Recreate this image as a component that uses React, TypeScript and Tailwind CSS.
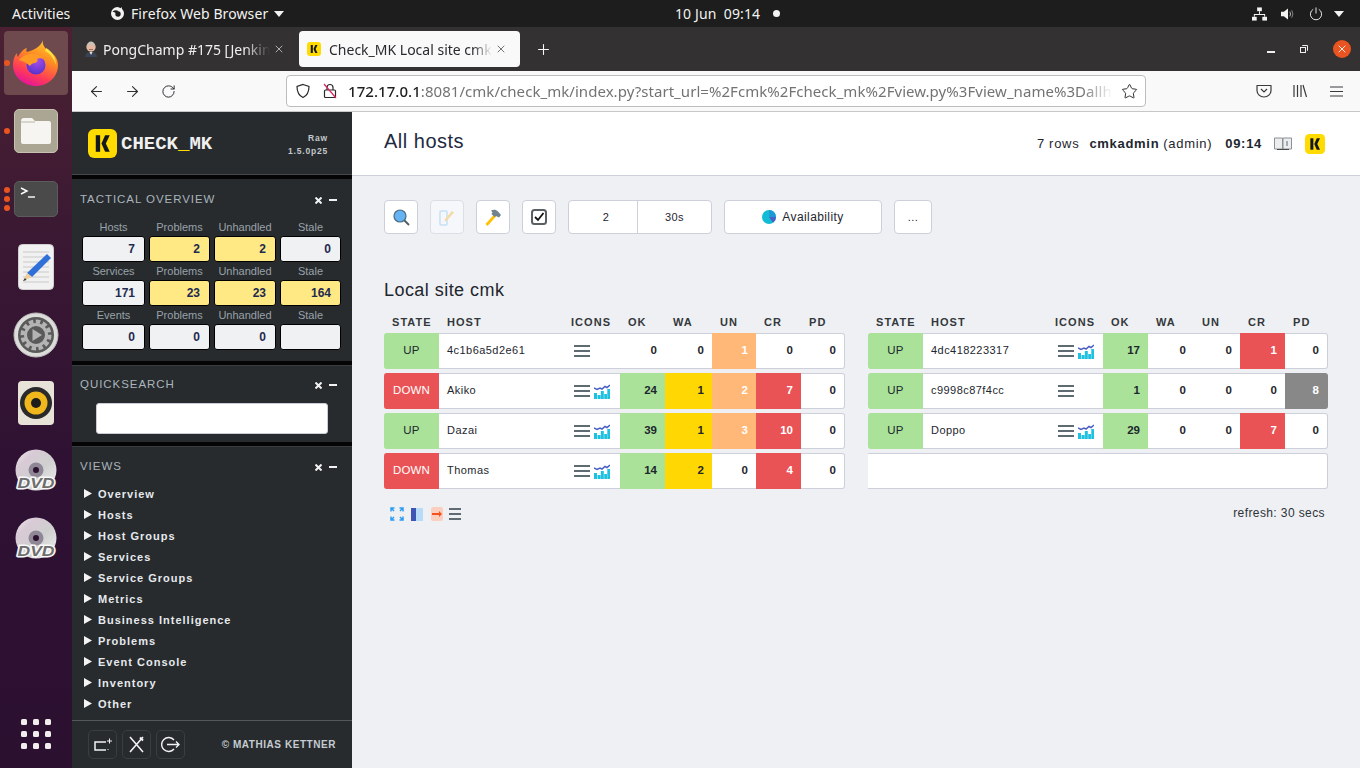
import React from 'react'
import { ArrowLeft, ArrowRight, RotateCw, Star, X, Plus } from 'lucide-react'

const sans = 'font-["Liberation_Sans",Arial,sans-serif]'
const ui = 'font-["Noto_Sans",sans-serif]'

type Tone = 'ok' | 'warn' | 'unk' | 'crit' | 'pend' | 'none'

interface HostRow {
  state: 'UP' | 'DOWN'
  host: string
  graph: boolean
  cells: [number, Tone][]
}

const leftRows: HostRow[] = [
  { state: 'UP', host: '4c1b6a5d2e61', graph: false, cells: [[0, 'none'], [0, 'none'], [1, 'unk'], [0, 'none'], [0, 'none']] },
  { state: 'DOWN', host: 'Akiko', graph: true, cells: [[24, 'ok'], [1, 'warn'], [2, 'unk'], [7, 'crit'], [0, 'none']] },
  { state: 'UP', host: 'Dazai', graph: true, cells: [[39, 'ok'], [1, 'warn'], [3, 'unk'], [10, 'crit'], [0, 'none']] },
  { state: 'DOWN', host: 'Thomas', graph: true, cells: [[14, 'ok'], [2, 'warn'], [0, 'none'], [4, 'crit'], [0, 'none']] },
]

const rightRows: HostRow[] = [
  { state: 'UP', host: '4dc418223317', graph: true, cells: [[17, 'ok'], [0, 'none'], [0, 'none'], [1, 'crit'], [0, 'none']] },
  { state: 'UP', host: 'c9998c87f4cc', graph: false, cells: [[1, 'ok'], [0, 'none'], [0, 'none'], [0, 'none'], [8, 'pend']] },
  { state: 'UP', host: 'Doppo', graph: true, cells: [[29, 'ok'], [0, 'none'], [0, 'none'], [7, 'crit'], [0, 'none']] },
]

const toneClass: Record<Tone, string> = {
  ok: 'bg-[#a9e298] border-[#a9e298] text-[#1e262e]',
  warn: 'bg-[#ffd703] border-[#ffd703] text-[#1e262e]',
  unk: 'bg-[#ffb878] border-[#ffb878] text-white',
  crit: 'bg-[#ea5355] border-[#ea5355] text-white',
  pend: 'bg-[#888888] border-[#888888] text-white',
  none: 'bg-white border-[#cdcfdb] text-[#1e262e]',
}

const views = ['Overview', 'Hosts', 'Host Groups', 'Services', 'Service Groups', 'Metrics', 'Business Intelligence', 'Problems', 'Event Console', 'Inventory', 'Other']

const tactical = [
  { labels: ['Hosts', 'Problems', 'Unhandled', 'Stale'], values: ['7', '2', '2', '0'], hot: [false, true, true, false] },
  { labels: ['Services', 'Problems', 'Unhandled', 'Stale'], values: ['171', '23', '23', '164'], hot: [false, true, true, true] },
  { labels: ['Events', 'Problems', 'Unhandled', 'Stale'], values: ['0', '0', '0', ''], hot: [false, false, false, false] },
]

const tacticalWidths = ['w-[63px]', 'w-[61px]', 'w-[62px]', 'w-[61px]']

function CmkLogo({ size }: { size: number }) {
  return (
    <svg width={size} height={size} viewBox="0 0 28 28">
      <rect x="0" y="0" width="28" height="28" rx="6" fill="#ffdb00" />
      <path d="M7.5 6h4.2v16H7.5z" fill="#15181a" />
      <path d="M21 6h-4.500l-3.500 8 3.500 8H21l-3.800-8z" fill="#15181a" />
    </svg>
  )
}

function Firefox() {
  return (
    <svg width="46" height="46" viewBox="0 0 46 46">
      <defs>
        <linearGradient id="ffBody" x1="0.8" y1="0" x2="0.35" y2="1">
          <stop offset="0" stopColor="#ffd02a" />
          <stop offset="0.4" stopColor="#ff8a24" />
          <stop offset="0.75" stopColor="#ff3b58" />
          <stop offset="1" stopColor="#e5149a" />
        </linearGradient>
        <radialGradient id="ffGlobe" cx="0.55" cy="0.3" r="0.8">
          <stop offset="0" stopColor="#a94de8" />
          <stop offset="1" stopColor="#4b2fc9" />
        </radialGradient>
      </defs>
      <path d="M30 0c-1 4 1 7 5 11 6 2 10 8 10 14 0 12-10 21-22 21S0 37 0 25c0-4 1-9 4-12 0 2 0 3 1 4 2-4 5-8 9-9-1 2-1 3 0 4 6-2 13-4 16-12z" fill="url(#ffBody)" />
      <circle cx="23" cy="25" r="9.5" fill="url(#ffGlobe)" />
      <path d="M6 20c3-4 8-6 13-6 6 0 10 2 13 6-3-2-6-2-8-1 1 1 1 3-2 4-2 0-4 1-5 3-3-3-7-5-11-6z" fill="#ff9a24" />
      <path d="M33 8c6 3 10 10 10 17-2-6-5-11-11-14z" fill="#ffe23f" />
    </svg>
  )
}

function Files() {
  return (
    <div className="w-[44px] h-[44px] rounded-[5px] bg-[#aba593] border border-[#c6c1b0] flex items-center justify-center">
      <svg width="32" height="28" viewBox="0 0 32 28">
        <path d="M1 4a3 3 0 0 1 3-3h8l3 3h14a2 2 0 0 1 2 2v19a2 2 0 0 1-2 2H3a2 2 0 0 1-2-2z" fill="#f6f5f2" />
        <path d="M1 5h14" stroke="#d8d5cb" strokeWidth="2" />
      </svg>
    </div>
  )
}

function Terminal() {
  return (
    <div className="w-[44px] h-[36px] rounded-[5px] bg-[#4a4a4a] border border-[#5c5c5c]">
      <svg width="28" height="20" viewBox="0 0 28 20" className="ml-[4px] mt-[3px]">
        <path d="M2 3l6 3-6 3" stroke="#fff" strokeWidth="1.4" fill="none" />
        <path d="M9 12h7" stroke="#fff" strokeWidth="1.4" />
      </svg>
    </div>
  )
}

function Editor() {
  return (
    <svg width="36" height="46" viewBox="0 0 36 46">
      <rect x="0.5" y="0.5" width="35" height="45" rx="4" fill="#f1f1f1" stroke="#d0d0d0" />
      <g stroke="#c9c9c9" strokeWidth="1">
        <path d="M5 8h26M5 13h26M5 18h26M5 23h26M5 28h26M5 33h26M5 38h26" />
      </g>
      <path d="M29 10l4 4-19 19-5-4z" fill="#2f6fd8" />
      <path d="M9 29l5 4-9 4z" fill="#eecf9c" />
      <path d="M5 37l2-3 1.5 2z" fill="#333" />
    </svg>
  )
}

function SettingsIcon() {
  return (
    <svg width="46" height="46" viewBox="0 0 46 46">
      <circle cx="23" cy="23" r="22" fill="#dcdcda" stroke="#bcbcba" />
      <circle cx="23" cy="23" r="18" fill="#5a5a5a" />
      <circle cx="23" cy="23" r="13.5" fill="none" stroke="#b4b4b4" strokeWidth="4" strokeDasharray="4.5 2.5" />
      <circle cx="23" cy="23" r="10.5" fill="#5a5a5a" stroke="#b4b4b4" strokeWidth="3" />
      <path d="M19.5 17l9.5 6-9.5 6z" fill="#b4b4b4" />
    </svg>
  )
}

function Speaker() {
  return (
    <div className="w-[36px] h-[44px] rounded-[4px] bg-[#e7e3d9] flex items-center justify-center">
      <svg width="32" height="32" viewBox="0 0 32 32">
        <circle cx="16" cy="16" r="16" fill="#2a2a2a" />
        <circle cx="16" cy="16" r="11.5" fill="#f0b71c" />
        <circle cx="16" cy="16" r="5" fill="#1c1c1c" />
      </svg>
    </div>
  )
}

function Dvd() {
  return (
    <svg width="44" height="44" viewBox="0 0 44 44">
      <defs>
        <linearGradient id="disc" x1="0" y1="0" x2="1" y2="1">
          <stop offset="0" stopColor="#eeeeee" />
          <stop offset="0.25" stopColor="#d9cad6" />
          <stop offset="0.55" stopColor="#cfcfcf" />
          <stop offset="1" stopColor="#f0f0f0" />
        </linearGradient>
      </defs>
      <circle cx="22" cy="21" r="20.5" fill="url(#disc)" />
      <circle cx="22" cy="21" r="7.5" fill="#8f8795" />
      <circle cx="22" cy="21" r="3" fill="#2c1030" />
      <text x="22" y="39" textAnchor="middle" textLength="37" lengthAdjust="spacingAndGlyphs" fontFamily="Liberation Sans" fontWeight="700" fontStyle="italic" fontSize="15" fill="#6e6e6e" stroke="#f8f8f8" strokeWidth="3" strokeLinejoin="round" paintOrder="stroke">DVD</text>
    </svg>
  )
}

function DockItem({ dots = 0, active = false, children }: { dots?: number; active?: boolean; children: React.ReactNode }) {
  return (
    <div className="relative h-[68px] flex items-center justify-center">
      {active && <div className="absolute left-[4px] top-[2px] w-[64px] h-[64px] rounded-[4px] bg-[#6e4a4f]" />}
      <div className="absolute left-[4px] top-0 h-full flex flex-col justify-center gap-[3px]">
        {Array.from({ length: dots }).map((_, i) => (
          <span key={i} className="w-[6px] h-[6px] rounded-full bg-[#e95420]" />
        ))}
      </div>
      <div className="relative flex items-center justify-center">{children}</div>
    </div>
  )
}

function Dock() {
  return (
    <aside className="w-[72px] shrink-0 pt-[2px] flex flex-col bg-[linear-gradient(180deg,#4b2132_0%,#3a1833_30%,#2e1133_60%,#2c1030_100%)]">
      <DockItem dots={1} active><Firefox /></DockItem>
      <DockItem dots={1}><Files /></DockItem>
      <DockItem dots={3}><Terminal /></DockItem>
      <DockItem><Editor /></DockItem>
      <DockItem><SettingsIcon /></DockItem>
      <DockItem><Speaker /></DockItem>
      <DockItem><Dvd /></DockItem>
      <DockItem><Dvd /></DockItem>
      <div className="mt-auto mb-[19px] ml-[21px] grid grid-cols-3 w-[30px] gap-[6px]">
        {Array.from({ length: 9 }).map((_, i) => (
          <span key={i} className="w-[6px] h-[6px] rounded-[1.5px] bg-[#f2eeee]" />
        ))}
      </div>
    </aside>
  )
}

function TopBar() {
  return (
    <header className={`${ui} h-[27px] bg-[#1d1d1d] text-[#f3f3f1] text-[14px] flex items-center`}>
      <span className="ml-[12px] w-[98px]">Activities</span>
      <svg width="15" height="15" viewBox="0 0 15 15">
        <path d="M7.5 1a6.5 6.5 0 1 0 6.5 6.5c0-1.800-.8-3.500-2-4.600l-.4-1.900-1 1.300A6 6 0 0 0 7.5 1z" fill="#f3f3f1" />
        <circle cx="8" cy="8" r="2.7" fill="#1d1d1d" />
        <path d="M2.5 5.5c2-1.500 4-1.500 6-.5L6 7z" fill="#1d1d1d" />
      </svg>
      <span className="ml-[6px] w-[143px] tracking-[0.1px]">Firefox Web Browser</span>
      <svg width="10" height="6" viewBox="0 0 10 6"><path d="M0 0h10L5 6z" fill="#f3f3f1" /></svg>
      <span className="ml-[391px] w-[98px] tracking-[0.1px]">10 Jun&nbsp; 09:14</span>
      <span className="w-[7px] h-[7px] rounded-full bg-[#f3f3f1]" />
      <div className="ml-auto mr-[16px] flex items-center">
        <svg width="15" height="14" viewBox="0 0 16 14" fill="#f3f3f1">
          <rect x="5.5" y="0" width="5" height="4" />
          <rect x="0" y="10" width="5" height="4" />
          <rect x="11" y="10" width="5" height="4" />
          <path d="M7.5 4h1v3h5.500v3h-1V8H3v2H2V7h5.500z" />
        </svg>
        <svg width="14" height="14" viewBox="0 0 15 14" fill="#f3f3f1" className="ml-[14px]">
          <path d="M0 4.5h3L7.5 1v12L3 9.5H0z" />
          <path d="M9.5 4.5q1.500 2.500 0 5" stroke="#bdbdbd" fill="none" />
          <path d="M11.5 3q2.500 4 0 8" stroke="#8a8a8a" fill="none" />
        </svg>
        <svg width="14" height="14" viewBox="0 0 15 15" fill="none" stroke="#f3f3f1" strokeWidth="1" className="ml-[14px]">
          <path d="M4.5 2.5a6 6 0 1 0 6 0" />
          <path d="M7.5 0.5v6.500" />
        </svg>
        <svg width="10" height="6" viewBox="0 0 10 6" className="ml-[11px]"><path d="M0 0h10L5 6z" fill="#f3f3f1" /></svg>
      </div>
    </header>
  )
}

function JenkinsFace() {
  return (
    <svg width="14" height="16" viewBox="0 0 14 16">
      <path d="M1 16c0-3 2-5 6-5s6 2 6 5z" fill="#3a4256" />
      <path d="M5.5 11h3L7 14z" fill="#e8e4dc" />
      <circle cx="7" cy="6" r="4.7" fill="#e2b8a2" />
      <path d="M3 5c0-3 2-4.500 4-4.500S11 2 11 5C9 3 5 3 3 5z" fill="#c9c2ba" />
      <path d="M5 8.5h4" stroke="#8d5c48" strokeWidth="0.8" />
    </svg>
  )
}

function TabStrip() {
  return (
    <div className={`${ui} h-[44px] bg-[#333132] flex items-center text-[14px]`}>
      <div className="w-[227px] pl-[12px] flex items-center text-[#f0f0f0]">
        <JenkinsFace />
        <span className="ml-[5px] w-[167px] whitespace-nowrap [mask-image:linear-gradient(to_right,black_85%,transparent)]">PongChamp #175 [Jenkin</span>
        <X size={12} strokeWidth={1.3} className="ml-[3px]" />
      </div>
      <div className="w-[221px] h-[36px] bg-[#f9f9fa] rounded-[4px] flex items-center pl-[8px] text-[#2a2a2e]">
        <CmkLogo size={14} />
        <span className="ml-[8px] w-[163px] whitespace-nowrap [mask-image:linear-gradient(to_right,black_88%,transparent)]">Check_MK Local site cmk</span>
        <X size={12} strokeWidth={1.3} className="ml-[3px]" />
      </div>
      <Plus size={17} strokeWidth={1.5} color="#f8f8f8" className="ml-[15px]" />
      <div className="ml-auto flex items-center">
        <span className="w-[8px] h-[1.5px] bg-[#f0f0f0] mt-[6px]" />
        <svg width="8" height="8" viewBox="0 0 8 8" fill="none" stroke="#f0f0f0" className="ml-[25px]">
          <rect x="0.5" y="2.5" width="5" height="5" />
          <path d="M2.5 1V0.5h5v5H7" />
        </svg>
        <span className="ml-[25px] mr-[9px] w-[18px] h-[18px] rounded-full bg-[#e95420] flex items-center justify-center">
          <X size={12} strokeWidth={1.8} color="#fff" />
        </span>
      </div>
    </div>
  )
}

function NavBar() {
  return (
    <div className={`${ui} h-[41px] bg-[#f9f9fa] border-b border-[#c7c7c7] flex items-center text-[#2f2f32]`}>
      <ArrowLeft size={17} strokeWidth={1.5} className="ml-[16px]" />
      <ArrowRight size={17} strokeWidth={1.5} className="ml-[19px]" />
      <RotateCw size={15} strokeWidth={1.6} className="ml-[20px]" />
      <div className="ml-[110px] w-[860px] h-[32px] rounded-[4px] border border-[#bdbdbd] bg-white flex items-center">
        <svg width="16" height="16" viewBox="0 0 16 16" fill="none" stroke="#2a2a2e" strokeWidth="1.2" className="ml-[8px]">
          <path d="M8 1.5l6 2c0 5-1.500 9-6 11-4.500-2-6-6-6-11z" />
        </svg>
        <svg width="14" height="16" viewBox="0 0 14 16" fill="none" className="ml-[12px]">
          <rect x="1.5" y="7" width="11" height="7.5" rx="1" stroke="#2a2a2e" strokeWidth="1.2" />
          <path d="M4 7V4.500a3 3 0 0 1 6 0V7" stroke="#2a2a2e" strokeWidth="1.2" />
          <path d="M1 1l12 14" stroke="#e0245e" strokeWidth="1.2" />
        </svg>
        <div className="ml-[11px] w-[765px] whitespace-nowrap text-[15px] tracking-[0.05px] text-[#737373] [mask-image:linear-gradient(to_right,black_96%,transparent)]">
          <span className="text-[#1f1f21] font-medium">172.17.0.1</span>:8081/cmk/check_mk/index.py?start_url=%2Fcmk%2Fcheck_mk%2Fview.py%3Fview_name%3Dallh
        </div>
        <Star size={17} strokeWidth={1.4} className="ml-[8px]" />
      </div>
      <svg width="16" height="14" viewBox="0 0 16 14" fill="none" stroke="#3a3a3c" strokeWidth="1.2" className="ml-[110px]">
        <path d="M1 1.5h14v5a7 6.500 0 0 1-14 0z" strokeLinejoin="round" />
        <path d="M5 5l3 3 3-3" />
      </svg>
      <svg width="14" height="14" viewBox="0 0 14 14" fill="none" stroke="#3a3a3c" strokeWidth="1.2" className="ml-[21px]">
        <path d="M1 1v12M4.5 1v12M8 1v12M10 1l3.500 12" />
      </svg>
      <svg width="13" height="11" viewBox="0 0 13 11" fill="none" stroke="#3a3a3c" strokeWidth="1.2" className="ml-[23px]">
        <path d="M0 1h13M0 5.5h13M0 10h13" />
      </svg>
    </div>
  )
}

function PanelTitle({ title }: { title: string }) {
  return (
    <div className="h-[16px] flex items-center justify-between pl-[8px] pr-[15px]">
      <span className="text-[11.5px] tracking-[0.95px] uppercase text-[#aab4bd]">{title}</span>
      <span className="flex items-center gap-[7px]">
        <svg width="7" height="7" viewBox="0 0 7 7" stroke="#f2f2f2" strokeWidth="2"><path d="M0.5 0.5l6 6M6.5 0.5l-6 6" /></svg>
        <span className="w-[8px] h-[2px] bg-[#f2f2f2]" />
      </span>
    </div>
  )
}

function Divider() {
  return <div className="h-[5px] bg-[#050505] border-b border-[#3a3d3f]" />
}

function TacticalOverview() {
  return (
    <section className="h-[182px] pt-[13px]">
      <PanelTitle title="Tactical Overview" />
      <div className="mt-[11px] pl-[10px] flex flex-col">
        {tactical.map((row, r) => (
          <div key={r} className="h-[44px]">
            <div className="flex h-[17px] gap-[4px] items-center">
              {row.labels.map((l, i) => (
                <span key={i} className={`${tacticalWidths[i]} text-center text-[11px] text-[#99a2aa]`}>{l}</span>
              ))}
            </div>
            <div className="flex gap-[4px]">
              {row.values.map((v, i) => (
                <span
                  key={i}
                  className={`${tacticalWidths[i]} h-[26px] rounded-[3px] border border-black flex items-center justify-end pr-[9px] text-[12px] font-bold text-[#1e2a4f] ${row.hot[i] ? 'bg-[#ffe984]' : 'bg-[#f0f1f3]'}`}
                >
                  {v}
                </span>
              ))}
            </div>
          </div>
        ))}
      </div>
    </section>
  )
}

function Sidebar() {
  return (
    <aside className={`${sans} w-[280px] shrink-0 bg-[#272b2d] flex flex-col`}>
      <div className="h-[63px] pl-[16px] pr-[24px] flex items-center border-b border-[#45494b]">
        <CmkLogo size={29} />
        <span className='ml-[4px] pt-[3px] font-["Liberation_Mono",monospace] font-bold text-[19px] text-[#f0f0f0]'>
          CHECK<span className="text-[#ffdb00]">_</span>MK
        </span>
        <div className="ml-auto pt-[3px] text-right text-[8.5px] font-bold tracking-[0.8px] leading-[13px] text-[#c3c8cc]">
          <div>Raw</div>
          <div>1.5.0p25</div>
        </div>
      </div>
      <div className="h-[4px] bg-[#050505]" />
      <TacticalOverview />
      <Divider />
      <section className="h-[76px] pt-[11px]">
        <PanelTitle title="Quicksearch" />
        <input className="block mt-[10px] ml-[24px] w-[232px] h-[31px] rounded-[3px] bg-white border border-[#c9cbd6]" />
      </section>
      <Divider />
      <section className="flex-1 pt-[12px]">
        <PanelTitle title="Views" />
        <ul className="mt-[9px]">
          {views.map(v => (
            <li key={v} className="h-[21px] pl-[12px] flex items-center">
              <svg width="8" height="9" viewBox="0 0 8 9" className="-mt-[2px]"><path d="M0 0l8 4.500L0 9z" fill="#f4f4f4" /></svg>
              <span className="ml-[6px] text-[11px] font-bold tracking-[1px] text-[#e6e9ed]">{v}</span>
            </li>
          ))}
        </ul>
      </section>
      <footer className="h-[48px] border-t border-[#54585a] flex items-center pl-[16px] pr-[16px]">
        <div className="flex gap-[5px]">
          <span className="w-[29px] h-[29px] rounded-[5px] border border-[#3a3e40] flex items-center justify-center">
            <svg width="20" height="14" viewBox="0 0 20 14" fill="none" stroke="#f2f2f2" strokeWidth="1.5">
              <path d="M13 4H2v8h11" />
              <path d="M15 12v-1M14 3h5M16.5 0.5v5" strokeWidth="1" />
            </svg>
          </span>
          <span className="w-[29px] h-[29px] rounded-[5px] border border-[#3a3e40] flex items-center justify-center">
            <svg width="17" height="17" viewBox="0 0 17 17" fill="none" stroke="#f2f2f2" strokeWidth="1.6">
              <path d="M2 1l13 15M15 1L2 16" />
              <path d="M12 1.5l3 3" strokeWidth="2" />
            </svg>
          </span>
          <span className="w-[29px] h-[29px] rounded-[5px] border border-[#3a3e40] flex items-center justify-center">
            <svg width="19" height="17" viewBox="0 0 19 17" fill="none" stroke="#f2f2f2" strokeWidth="1.4">
              <path d="M13 4a7 7 0 1 0 0 9" />
              <path d="M6 8.5h12M15 5.5l3 3-3 3" />
            </svg>
          </span>
        </div>
        <span className="ml-auto text-[10px] font-bold tracking-[0.55px] text-[#c6ccd2]">© MATHIAS KETTNER</span>
      </footer>
    </aside>
  )
}

function Burger({ width = 16, className = '' }: { width?: number; className?: string }) {
  return (
    <svg width={width} height="12" viewBox="0 0 16 12" preserveAspectRatio="none" className={className} fill="#5f6b73">
      <rect y="0" width="16" height="2" />
      <rect y="5" width="16" height="2" />
      <rect y="10" width="16" height="2" />
    </svg>
  )
}

function GraphIcon() {
  return (
    <svg width="16" height="16" viewBox="0 0 16 16" className="ml-[4px]">
      <path d="M0 5l3 1.500 3-1.500 2 1 3-2.500 2 1 3-2.500" fill="none" stroke="#4b5fc4" strokeWidth="1.5" />
      <path d="M0 10h3v6H0zM3.5 12H6.500v4h-3zM6.800 8h3v8h-3zM10.200 11h2.800v5h-2.800zM13.300 6H16v10h-2.700z" fill="#1fc1e0" />
    </svg>
  )
}

function HostTable({ rows, widths, empty }: { rows: HostRow[]; widths: string[]; empty?: boolean }) {
  const heads = ['STATE', 'HOST', 'ICONS', 'OK', 'WA', 'UN', 'CR', 'PD']
  return (
    <div className="flex flex-col">
      <div className="flex h-[13px] items-center text-[11px] font-bold tracking-[1.05px] text-[#33383c]">
        {heads.map((h, i) => (
          <span key={h} className={`${widths[i]} pl-[8px]`}>{h}</span>
        ))}
      </div>
      <div className="mt-[4px] flex flex-col gap-[4px]">
        {rows.map(row => (
          <div key={row.host} className="flex h-[36px]">
            <span className={`${widths[0]} flex items-center justify-center pb-[1px] text-[11.5px] tracking-[0.2px] rounded-l-[3px] border-y ${row.state === 'UP' ? toneClass.ok : toneClass.crit}`}>
              {row.state}
            </span>
            <span className={`${widths[1]} flex items-center pl-[8px] pb-[2px] text-[11px] tracking-[0.45px] text-[#1e262e] bg-white border-y border-[#cdcfdb]`}>
              {row.host}
            </span>
            <span className={`${widths[2]} flex items-center pl-[11px] bg-white border-y border-[#cdcfdb]`}>
              <Burger />
              {row.graph && <GraphIcon />}
            </span>
            {row.cells.map(([value, tone], i) => (
              <span
                key={i}
                className={`${widths[i + 3]} flex items-center justify-end pr-[8px] text-[11.5px] font-bold border-y ${toneClass[tone]} ${i === 4 ? 'rounded-r-[3px] border-r' : ''}`}
              >
                {value}
              </span>
            ))}
          </div>
        ))}
        {empty && <div className="h-[36px] bg-white border-y border-r border-[#cdcfdb] rounded-r-[3px]" />}
      </div>
    </div>
  )
}

function ToolButton({ children, className = '' }: { children: React.ReactNode; className?: string }) {
  return (
    <span className={`h-[34px] rounded-[4px] border border-[#cdcfdb] flex items-center justify-center ${className}`}>
      {children}
    </span>
  )
}

function Toolbar() {
  return (
    <div className="flex text-[11px] tracking-[0.4px] text-[#1e262e]">
      <ToolButton className="w-[34px] bg-white">
        <svg width="17" height="17" viewBox="0 0 17 17">
          <path d="M11 11l5 5" stroke="#4d5a60" strokeWidth="1.8" />
          <circle cx="7" cy="7" r="6" fill="#65b3f2" stroke="#4a6b80" strokeWidth="1.2" />
        </svg>
      </ToolButton>
      <ToolButton className="ml-[12px] w-[34px] bg-[#f5f7fa] border-[#dcdee6]">
        <svg width="16" height="18" viewBox="0 0 16 18" fill="none">
          <rect x="1" y="3" width="7" height="14" rx="1" stroke="#c5e2f7" strokeWidth="1.5" />
          <path d="M6 11l7-8 2 1.500-7 8-2.500 1z" fill="#f5d9a6" />
        </svg>
      </ToolButton>
      <ToolButton className="ml-[12px] w-[34px] bg-white">
        <svg width="18" height="18" viewBox="0 0 18 18">
          <path d="M1.5 16l9-10 2 2-9 10z" fill="#ffc107" />
          <path d="M7 2.5c3-1.500 5-1 7 1l3 3.500-2 2.500-3-1.500-1.500 1-3-3 1-1.500z" fill="#6f8490" />
        </svg>
      </ToolButton>
      <ToolButton className="ml-[12px] w-[34px] bg-white">
        <svg width="16" height="16" viewBox="0 0 16 16" fill="none">
          <rect x="1" y="1" width="14" height="14" rx="2.5" stroke="#5a5f63" strokeWidth="2" />
          <path d="M4 8l3 3 5.500-7" stroke="#111" strokeWidth="1.8" />
        </svg>
      </ToolButton>
      <ToolButton className="ml-[12px] w-[144px] bg-white justify-start">
        <span className="w-[69px] h-full pl-[6px] flex items-center justify-center border-r border-[#cdcfdb]">2</span>
        <span className="flex-1 text-center">30s</span>
      </ToolButton>
      <ToolButton className="ml-[12px] w-[158px] bg-white text-[12px]">
        <svg width="14" height="14" viewBox="0 0 14 14" className="mr-[6px]">
          <circle cx="7" cy="7" r="7" fill="#12bcd6" />
          <path d="M7 0a7 7 0 0 1 7 7H7z" fill="#1c9ad6" />
          <path d="M14 7a7 7 0 0 1-3 5.700L7 7z" fill="#4b5fc4" />
        </svg>
        Availability
      </ToolButton>
      <ToolButton className="ml-[12px] w-[38px] bg-white">...</ToolButton>
    </div>
  )
}

function Main() {
  return (
    <main className={`${sans} flex-1 bg-[#eff0f3] flex flex-col text-[#1e262e]`}>
      <div className="h-[64px] bg-white border-b border-[#cdcfdb] pl-[32px] pr-[35px] flex items-center">
        <h1 className="text-[20px] tracking-[0.5px] pb-[6px] text-[#1e2a3f]">All hosts</h1>
        <div className="ml-auto flex items-center text-[13px] tracking-[0.7px]">
          <span>7 rows</span>
          <span className="ml-[10px] font-bold">cmkadmin</span>
          <span className="ml-[4px]">(admin)</span>
          <span className="ml-[13px] font-bold">09:14</span>
          <svg width="18" height="14" viewBox="0 0 18 14" fill="none" stroke="#8b9196" strokeWidth="1" className="ml-[12px]">
            <path d="M0.5 1h8v11h-8zM9 1h8.500v11H9z" fill="#ecedef" />
            <path d="M3 12.5h12" stroke="#4a4a4a" />
            <path d="M13 4v5" stroke="#5a6a75" />
          </svg>
          <span className="ml-[13px] flex"><CmkLogo size={20} /></span>
        </div>
      </div>
      <div className="pl-[32px] pt-[24px]">
        <Toolbar />
        <h2 className="mt-[46px] text-[18px] tracking-[0.45px] leading-[21px] text-[#1e262e]">Local site cmk</h2>
        <div className="mt-[15px] flex gap-[23px]">
          <HostTable rows={leftRows} widths={['w-[55px]', 'w-[124px]', 'w-[57px]', 'w-[45px]', 'w-[47px]', 'w-[44px]', 'w-[45px]', 'w-[44px]']} />
          <HostTable rows={rightRows} widths={['w-[55px]', 'w-[124px]', 'w-[56px]', 'w-[45px]', 'w-[46px]', 'w-[46px]', 'w-[45px]', 'w-[43px]']} empty />
        </div>
        <div className="mt-[15px] flex items-center pl-[6px] pr-[35px]">
          <svg width="14" height="14" viewBox="0 0 14 14" fill="none" stroke="#2d9cf0" strokeWidth="1.5">
            <path d="M1 4.5V1h3.500M9.500 1H13v3.500M1 9.500V13h3.500M9.500 13H13V9.500M1 1l3 3M13 1l-3 3M1 13l3-3M13 13l-3-3" />
          </svg>
          <svg width="12" height="13" viewBox="0 0 12 13" className="ml-[7px]">
            <rect width="5" height="13" fill="#3f55b5" />
            <rect x="5" width="7" height="13" fill="#b8dcf8" />
          </svg>
          <span className="ml-[8px] w-[12px] h-[14px] bg-[#fbcfc0] rounded-[2px] flex items-center justify-center">
            <svg width="10" height="6" viewBox="0 0 10 6"><path d="M0 2h7V0l3 3-3 3V4H0z" fill="#f4511e" /></svg>
          </span>
          <Burger width={12} className="ml-[6px]" />
          <span className="ml-auto text-[12px] tracking-[0.4px] pb-[2px] text-[#2d3338]">refresh: 30 secs</span>
        </div>
      </div>
    </main>
  )
}

export default function App() {
  return (
    <div className="w-[1360px] h-[768px] overflow-hidden flex flex-col">
      <TopBar />
      <div className="flex-1 flex min-h-0">
        <Dock />
        <div className="flex-1 flex flex-col min-w-0">
          <TabStrip />
          <NavBar />
          <div className="flex-1 flex min-h-0">
            <Sidebar />
            <Main />
          </div>
        </div>
      </div>
    </div>
  )
}
